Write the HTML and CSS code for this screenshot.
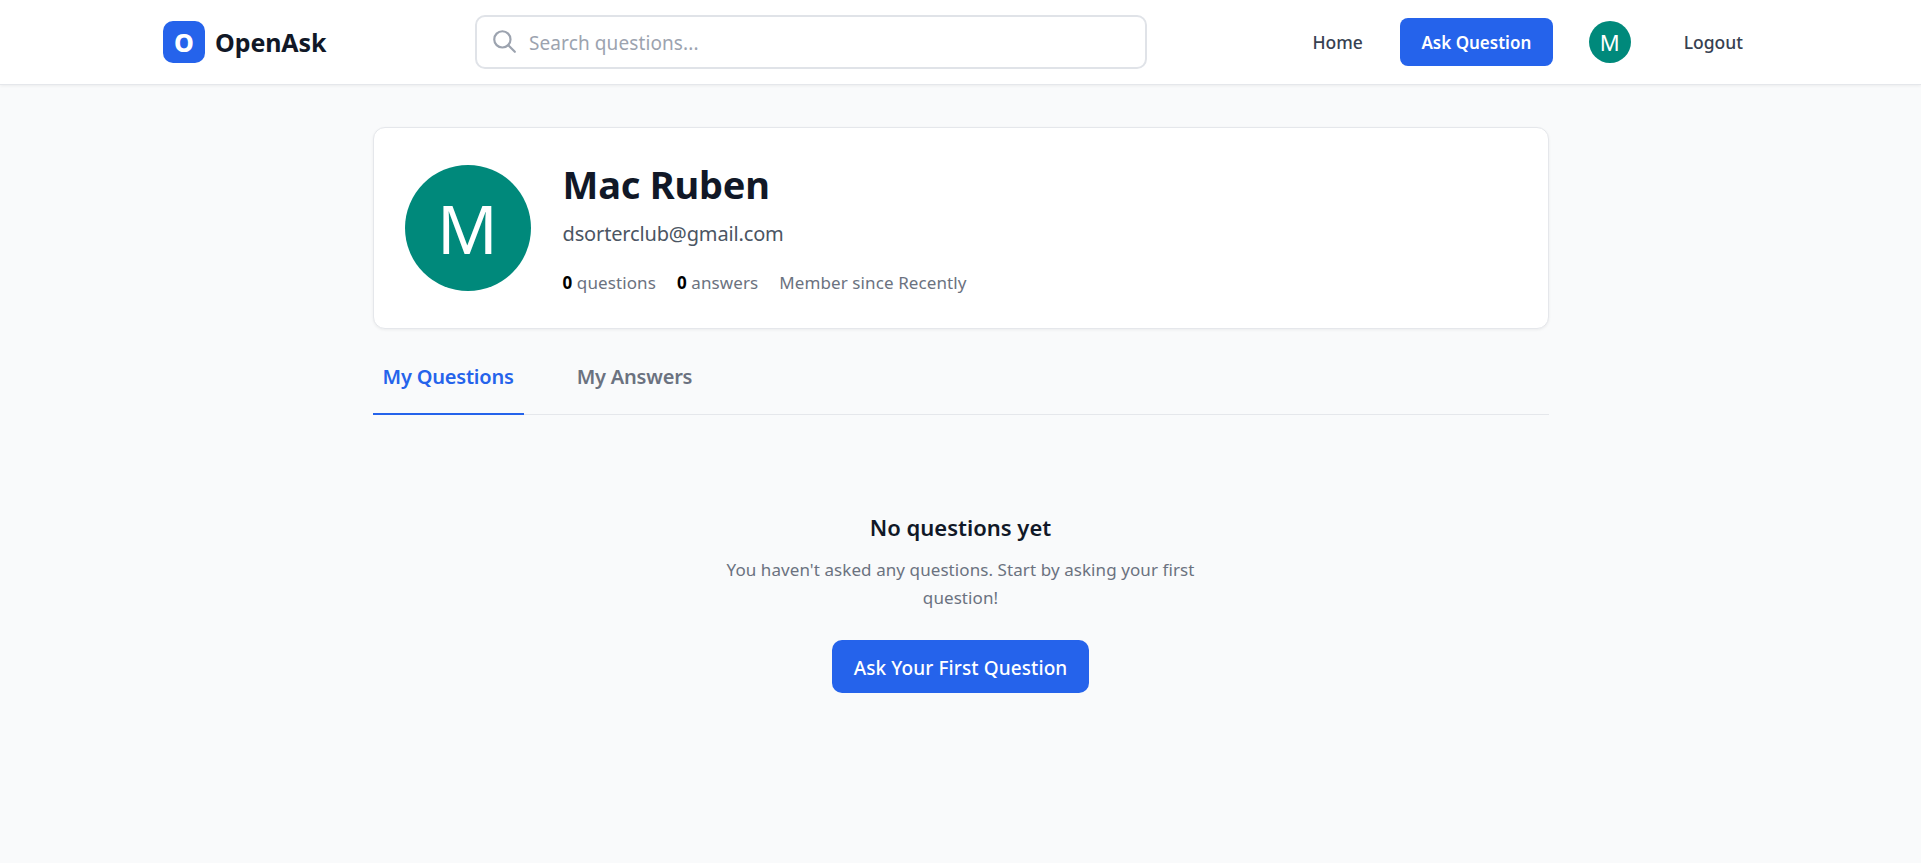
FILE: index.html
```html
<!DOCTYPE html>
<html>
    <head>
        <meta charset="utf-8">
        <title>OpenAsk</title>
        <link rel="stylesheet" href="styles.css">
    </head>
    <body>
        <header class="topbar">
            <div class="topbar-inner">
                <a class="brand" href="#">
                    <span class="brand-mark">O</span>
                    <span class="brand-name">OpenAsk</span>
                </a>
                <div class="search">
                    <svg class="search-icon" viewBox="0 0 24 24" fill="none" stroke="currentColor" stroke-width="2" stroke-linecap="round">
                        <circle cx="10.5" cy="10.5" r="7.5"></circle>
                        <path d="M16 16l6 6"></path>
                    </svg>
                    <span class="search-text">Search questions...</span>
                </div>
                <nav class="nav">
                    <a class="nav-link" href="#">Home</a>
                    <a class="nav-btn" href="#">Ask Question</a>
                    <span class="nav-avatar">M</span>
                    <a class="nav-link nav-logout" href="#">Logout</a>
                </nav>
            </div>
        </header>
        <main class="page">
            <section class="profile-card">
                <div class="profile-avatar">M</div>
                <div class="profile-info">
                    <h1 class="profile-name">Mac Ruben</h1>
                    <p class="profile-email">dsorterclub@gmail.com</p>
                    <div class="profile-stats">
                        <span><b>0</b> questions</span>
                        <span><b>0</b> answers</span>
                        <span>Member since Recently</span>
                    </div>
                </div>
            </section>
            <div class="tabs">
                <a class="tab tab-active" href="#">My Questions</a>
                <a class="tab" href="#">My Answers</a>
            </div>
            <section class="empty">
                <h3 class="empty-title">No questions yet</h3>
                <p class="empty-text">You haven't asked any questions. Start by asking your first question!</p>
                <a class="empty-btn" href="#">Ask Your First Question</a>
            </section>
        </main>
    </body>
</html>
```

FILE: styles.css
```css
* { box-sizing: border-box; }
body {
    margin: 0;
    background-color: #f9fafb;
    font-family: "Noto Sans", "Open Sans", sans-serif;
    color: #111827;
}
a { text-decoration: none; }

.topbar {
    height: 85px;
    background-color: white;
    border-bottom: 1px solid #e5e7eb;
    box-shadow: 0 1px 3px rgba(0, 0, 0, 0.06);
}
.topbar-inner {
    display: flex;
    align-items: center;
    height: 84px;
    padding-left: 163px;
    padding-right: 178px;
}

.brand {
    display: flex;
    align-items: center;
    gap: 10px;
    width: 312px;
}
.brand-mark {
    display: flex;
    align-items: center;
    justify-content: center;
    width: 42px;
    height: 42px;
    border-radius: 10px;
    background-color: #2563eb;
    color: white;
    font-size: 25px;
    font-weight: 800;
}
.brand-name {
    font-size: 25px;
    font-weight: 700;
    color: #111827;
    letter-spacing: -0.1px;
}

.search {
    display: flex;
    align-items: center;
    width: 672px;
    height: 54px;
    padding-left: 14px;
    border: 2px solid #e0e3e8;
    border-radius: 10px;
    background-color: white;
}
.search-icon {
    width: 26px;
    height: 26px;
    color: #9ca3af;
    margin-top: -2px;
}
.search-text {
    margin-left: 12px;
    padding-top: 1px;
    font-size: 19px;
    letter-spacing: 0.1px;
    color: #9ca3af;
}

.nav {
    display: flex;
    align-items: center;
    margin-left: auto;
}
.nav-link {
    font-size: 17.5px;
    font-weight: 500;
    color: #374151;
}
.nav-btn {
    display: flex;
    align-items: center;
    height: 48px;
    margin-left: 37px;
    padding: 0 21.5px;
    border-radius: 8px;
    background-color: #2563eb;
    color: white;
    font-size: 17px;
    font-weight: 600;
}
.nav-avatar {
    display: flex;
    align-items: center;
    justify-content: center;
    width: 42px;
    height: 42px;
    margin-left: 36px;
    border-radius: 50%;
    background-color: #00897b;
    color: white;
    font-size: 22px;
}
.nav-logout { margin-left: 53px; }

.page {
    width: 1176px;
    margin: 42px auto 0;
}

.profile-card {
    display: flex;
    align-items: center;
    gap: 32px;
    height: 202px;
    padding: 0 31px;
    background-color: white;
    border: 1px solid #e5e7eb;
    border-radius: 12px;
    box-shadow: 0 1px 3px rgba(0, 0, 0, 0.06);
}
.profile-avatar {
    display: flex;
    align-items: center;
    justify-content: center;
    width: 126px;
    height: 126px;
    border-radius: 50%;
    background-color: #00897b;
    color: white;
    font-size: 67px;
}
.profile-info { padding-bottom: 3px; }
.profile-name {
    margin: 0;
    font-size: 38px;
    line-height: 50px;
    font-weight: 700;
    letter-spacing: -0.2px;
    color: #111827;
}
.profile-email {
    margin: 11px 0 0;
    font-size: 20px;
    line-height: 28px;
    letter-spacing: -0.15px;
    color: #4b5563;
}
.profile-stats {
    display: flex;
    gap: 21px;
    margin-top: 23px;
    font-size: 17px;
    line-height: 24px;
    letter-spacing: 0.1px;
    color: #6b7280;
}
.profile-stats b { color: black; }

.tabs {
    display: flex;
    gap: 43px;
    margin-top: 12px;
    height: 74px;
    border-bottom: 1px solid #e5e7eb;
}
.tab {
    display: flex;
    align-items: center;
    padding: 0 10px 2px;
    font-size: 20px;
    font-weight: 600;
    letter-spacing: -0.2px;
    color: #6b7280;
}
.tab-active {
    color: #2563eb;
    border-bottom: 2px solid #2563eb;
    height: 74px;
}

.empty {
    display: flex;
    flex-direction: column;
    align-items: center;
    padding-top: 97px;
    text-align: center;
}
.empty-title {
    margin: 0;
    font-size: 22px;
    line-height: 30px;
    font-weight: 600;
    color: #111827;
}
.empty-text {
    width: 480px;
    margin: 14px 0 0;
    font-size: 17px;
    line-height: 28px;
    letter-spacing: 0.08px;
    color: #6b7280;
}
.empty-btn {
    display: flex;
    align-items: center;
    height: 53px;
    margin-top: 28px;
    padding: 2px 22px 0;
    border-radius: 10px;
    background-color: #2563eb;
    color: white;
    font-size: 19px;
    letter-spacing: 0.1px;
    font-weight: 500;
}
```
